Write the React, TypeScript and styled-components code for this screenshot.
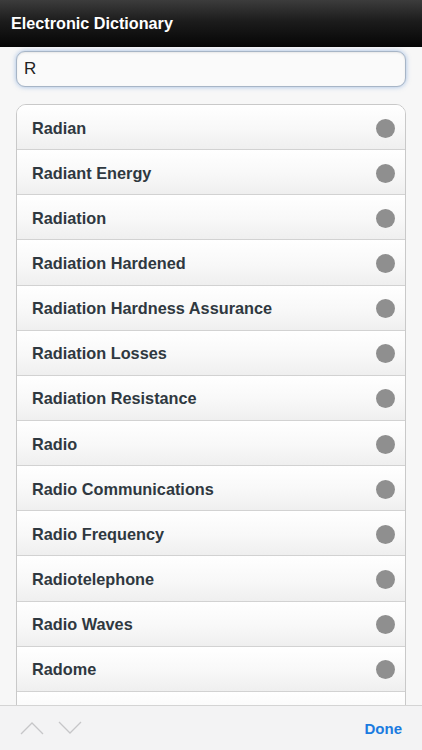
import React from 'react';
import styled, { createGlobalStyle } from 'styled-components';

const GlobalStyle = createGlobalStyle`
    html, body {
        margin: 0;
        padding: 0;
        background: #f7f7f7;
    }
    * {
        box-sizing: border-box;
    }
`;

const Screen = styled.div`
    width: 422px;
    height: 750px;
    display: flex;
    flex-direction: column;
    overflow: hidden;
    background: #f7f7f7;
    font-family: "Liberation Sans", Arial, sans-serif;
`;

const Header = styled.header`
    height: 47px;
    flex-shrink: 0;
    display: flex;
    align-items: center;
    padding-left: 11px;
    padding-bottom: 1px;
    background: linear-gradient(to bottom, #3c3c3c 0%, #1c1c1c 45%, #050505 100%);
    color: #ffffff;
    font-size: 16.2px;
    font-weight: bold;
`;

const Content = styled.main`
    flex: 1;
    overflow: hidden;
    padding: 4px 16px 0;
    display: flex;
    flex-direction: column;
    gap: 17px;
`;

const SearchInput = styled.input`
    height: 36px;
    width: 100%;
    flex-shrink: 0;
    border: 1px solid #a7b5c6;
    border-radius: 9px;
    background: #fafafa;
    box-shadow: 0 0 5px rgba(90, 140, 210, 0.55), inset 0 1px 2px rgba(0, 0, 0, 0.08);
    padding: 0 7px;
    font-family: "Liberation Sans", Arial, sans-serif;
    font-size: 17px;
    color: #222;
    outline: none;
`;

const List = styled.ul`
    list-style: none;
    margin: 0;
    padding: 0;
    flex-shrink: 0;
    border: 1px solid #c9c9c9;
    border-radius: 10px;
    overflow: hidden;
    background: #fff;
`;

const Row = styled.li`
    height: 45.15px;
    display: flex;
    align-items: center;
    justify-content: space-between;
    padding: 2px 10px 0 15px;
    border-bottom: 1px solid #d2d2d2;
    background: linear-gradient(to bottom, #ffffff 0%, #f8f8f8 55%, #efefef 100%);
    color: #2f3840;
    font-size: 16.3px;
    font-weight: bold;
`;

const Dot = styled.span`
    width: 19px;
    height: 19px;
    border-radius: 50%;
    background: #8f8f8f;
`;

const Toolbar = styled.footer`
    height: 45px;
    flex-shrink: 0;
    display: flex;
    align-items: center;
    justify-content: space-between;
    padding: 0 20px 0 20px;
    background: #f3f3f4;
    border-top: 1px solid #d4d4d4;
`;

const Arrows = styled.div`
    display: flex;
    gap: 14px;
    align-items: center;
`;

const DoneButton = styled.button`
    border: none;
    background: none;
    padding: 0;
    color: #1b7be0;
    font-family: "Liberation Sans", Arial, sans-serif;
    font-size: 15px;
    font-weight: bold;
`;

const words = [
    'Radian',
    'Radiant Energy',
    'Radiation',
    'Radiation Hardened',
    'Radiation Hardness Assurance',
    'Radiation Losses',
    'Radiation Resistance',
    'Radio',
    'Radio Communications',
    'Radio Frequency',
    'Radiotelephone',
    'Radio Waves',
    'Radome',
    'Radome Loss',
];

const Chevron: React.FC<{ up?: boolean }> = ({ up }) => (
    <svg width="24" height="14" viewBox="0 0 24 14">
        <polyline
            points={up ? '1,13 12,2 23,13' : '1,1 12,12 23,1'}
            fill="none"
            stroke="#c6c6c8"
            strokeWidth="1.3"
        />
    </svg>
);

const App: React.FC = () => {
    return (
        <>
            <GlobalStyle />
            <Screen>
                <Header>Electronic Dictionary</Header>
                <Content>
                    <SearchInput defaultValue="R" />
                    <List>
                        {words.map((word) => (
                            <Row key={word}>
                                {word}
                                <Dot />
                            </Row>
                        ))}
                    </List>
                </Content>
                <Toolbar>
                    <Arrows>
                        <Chevron up />
                        <Chevron />
                    </Arrows>
                    <DoneButton>Done</DoneButton>
                </Toolbar>
            </Screen>
        </>
    );
};

export default App;
